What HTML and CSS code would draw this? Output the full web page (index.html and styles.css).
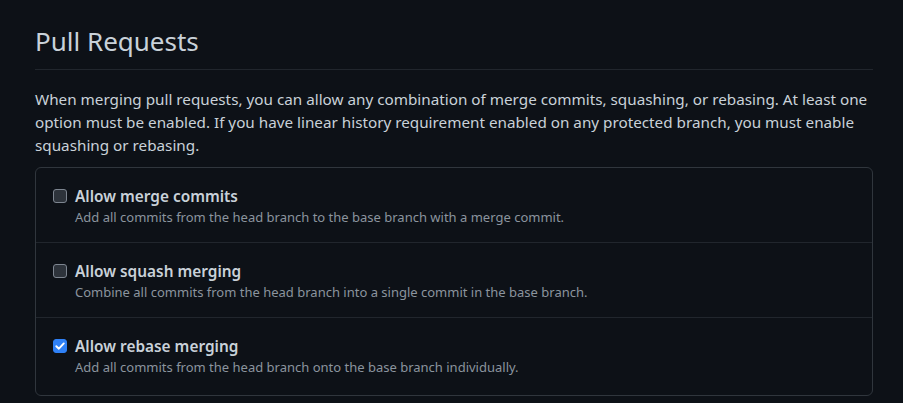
FILE: index.html
```html
<!DOCTYPE html>
<html lang="en">
<head>
<meta charset="utf-8">
<title>Pull Requests</title>
<link rel="stylesheet" href="styles.css">
</head>
<body>
<main class="page">
  <h2 class="subhead">Pull Requests</h2>
  <p class="intro">When merging pull requests, you can allow any combination of merge commits, squashing, or rebasing. At least one option must be enabled. If you have linear history requirement enabled on any protected branch, you must enable squashing or rebasing.</p>
  <div class="box">
    <div class="row">
      <span class="check"></span>
      <div class="text">
        <div class="label">Allow merge commits</div>
        <div class="note">Add all commits from the head branch to the base branch with a merge commit.</div>
      </div>
    </div>
    <div class="row">
      <span class="check"></span>
      <div class="text">
        <div class="label">Allow squash merging</div>
        <div class="note">Combine all commits from the head branch into a single commit in the base branch.</div>
      </div>
    </div>
    <div class="row">
      <span class="check checked"><svg viewBox="0 0 14 14" width="14" height="14"><path d="M3.3 7.2 L5.9 9.7 L10.8 4.4" fill="none" stroke="#ffffff" stroke-width="1.9" stroke-linecap="round" stroke-linejoin="round"/></svg></span>
      <div class="text">
        <div class="label">Allow rebase merging</div>
        <div class="note">Add all commits from the head branch onto the base branch individually.</div>
      </div>
    </div>
  </div>
</main>
</body>
</html>
```

FILE: styles.css
```css
html, body {
  margin: 0;
  padding: 0;
  background: #0d1117;
}
body {
  font-family: "Noto Sans", "Liberation Sans", sans-serif;
  color: #c9d1d9;
}
.page {
  padding: 21px 30px 0 35px;
}
.subhead {
  margin: 0;
  font-size: 26px;
  font-weight: 400;
  line-height: 40px;
  padding-bottom: 8px;
  border-bottom: 1px solid #21262d;
  color: #c9d1d9;
}
.intro {
  margin: 18px 0 10px;
  font-size: 15.25px;
  line-height: 23px;
  color: #c9d1d9;
}
.box {
  border: 1px solid #30363d;
  border-radius: 6px;
}
.row {
  display: flex;
  align-items: flex-start;
  gap: 8px;
  padding: 16px 16px 16px 17px;
}
.row + .row {
  border-top: 1px solid #21262d;
}
.row:last-child {
  padding-bottom: 19px;
}
.check {
  flex: none;
  width: 14px;
  height: 14px;
  margin-top: 5px;
  box-sizing: border-box;
  border: 1px solid #7d8590;
  border-radius: 3px;
  background: #2d333b;
  display: flex;
}
.check.checked {
  border-color: #2f81f7;
  background: #2f81f7;
}
.check svg {
  margin: -1px;
}
.label {
  font-size: 15.4px;
  font-weight: 600;
  line-height: 25px;
  color: #c9d1d9;
}
.note {
  font-size: 13px;
  line-height: 17px;
  color: #8b949e;
}
```
